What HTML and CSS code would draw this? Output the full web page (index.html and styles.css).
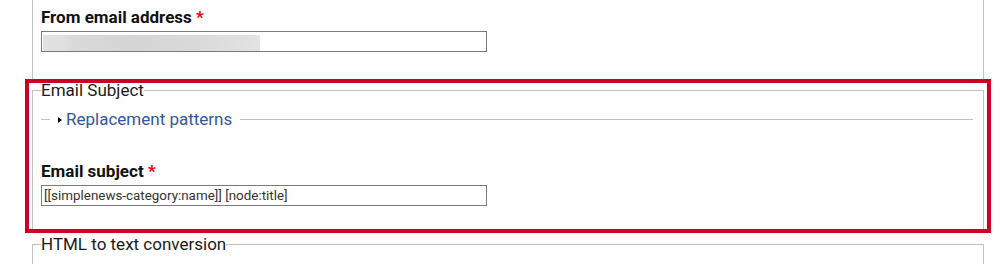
FILE: index.html
```html
<!DOCTYPE html>
<html>
<head>
<meta charset="utf-8">
<link rel="stylesheet" href="styles.css">
</head>
<body>
<div class="page">
  <fieldset class="fs fs-top">
    <div class="item">
      <label class="lbl">From email address <span class="req">*</span></label>
      <div class="input blurred"></div>
    </div>
  </fieldset>
  <div class="hl">
    <fieldset class="fs fs-subject">
      <legend class="lg">Email Subject</legend>
      <fieldset class="collapsed">
        <legend class="lg-link"><span class="tri"></span><a class="link" href="#">Replacement patterns</a></legend>
      </fieldset>
      <div class="item item-subject">
        <label class="lbl">Email subject <span class="req">*</span></label>
        <input class="input" type="text" value="[[simplenews-category:name]] [node:title]">
      </div>
    </fieldset>
    <div class="hl-box"></div>
  </div>
  <fieldset class="fs fs-html">
    <legend class="lg">HTML to text conversion</legend>
  </fieldset>
</div>
</body>
</html>
```
FILE: styles.css
```css
html, body {
  margin: 0;
  padding: 0;
  background: #fff;
}
body {
  font-family: Roboto, "Liberation Sans", Arial, sans-serif;
  color: #1a1a1a;
  overflow: hidden;
}
.page {
  padding: 0 16px 0 32px;
}
.fs {
  margin: 0;
  min-width: 0;
  border: 1px solid #c2c2c2;
  padding: 0 8px;
}
.fs-top {
  margin-top: -20px;
  padding-top: 26px;
  padding-bottom: 28px;
}
.lg {
  padding: 0;
  font-size: 17px;
  line-height: 19px;
  color: #1a1a1a;
}
.item {
  display: flex;
  flex-direction: column;
  align-items: flex-start;
}
.lbl {
  display: block;
  font-weight: 700;
  font-size: 17px;
  line-height: 20px;
  margin-bottom: 4px;
  color: #111;
}
.req {
  color: #ee0000;
}
.input {
  box-sizing: border-box;
  width: 446px;
  height: 21px;
  margin: 0;
  border: 1px solid #7a7a7a;
  border-radius: 0;
  padding: 0 2px;
  font-family: Roboto, "Liberation Sans", Arial, sans-serif;
  font-size: 13.4px;
  color: #333;
  background: #fff;
  outline: none;
}
.blurred {
  background-color: #fff;
  background-image: linear-gradient(to right, #e2e2e2 0, #e0e0e0 20px, #d9d9d9 30px, #d5d5d5 90px, #d8d8d8 130px, #dcdcdc 170px, #e0e0e0 200px, #e3e3e3 217px);
  background-size: 217px 16px;
  background-position: 1px 3px;
  background-repeat: no-repeat;
}
.hl {
  position: relative;
}
.fs-subject {
  padding-top: 0;
  padding-bottom: 24px;
}
.collapsed {
  margin: 10px 2px 0 0;
  min-width: 0;
  border: 0;
  border-top: 1px solid #c2c2c2;
  padding: 0 9px;
}
.lg-link {
  padding: 0 8px 0 2px;
  font-size: 17px;
  line-height: 19px;
  display: flex;
  align-items: center;
}
.tri {
  display: inline-block;
  width: 0;
  height: 0;
  margin-left: 6px;
  margin-right: 4px;
  border-left: 4px solid #000;
  border-top: 3.5px solid transparent;
  border-bottom: 3.5px solid transparent;
}
.link {
  color: #34579c;
  text-decoration: none;
}
.item-subject {
  margin-top: 32px;
}
.hl-box {
  position: absolute;
  top: -2px;
  left: -7px;
  right: -7px;
  bottom: -2px;
  box-sizing: border-box;
  border: 4px solid #cc0022;
  pointer-events: none;
}
.fs-html {
  margin-top: 4px;
  padding-bottom: 40px;
}
```
